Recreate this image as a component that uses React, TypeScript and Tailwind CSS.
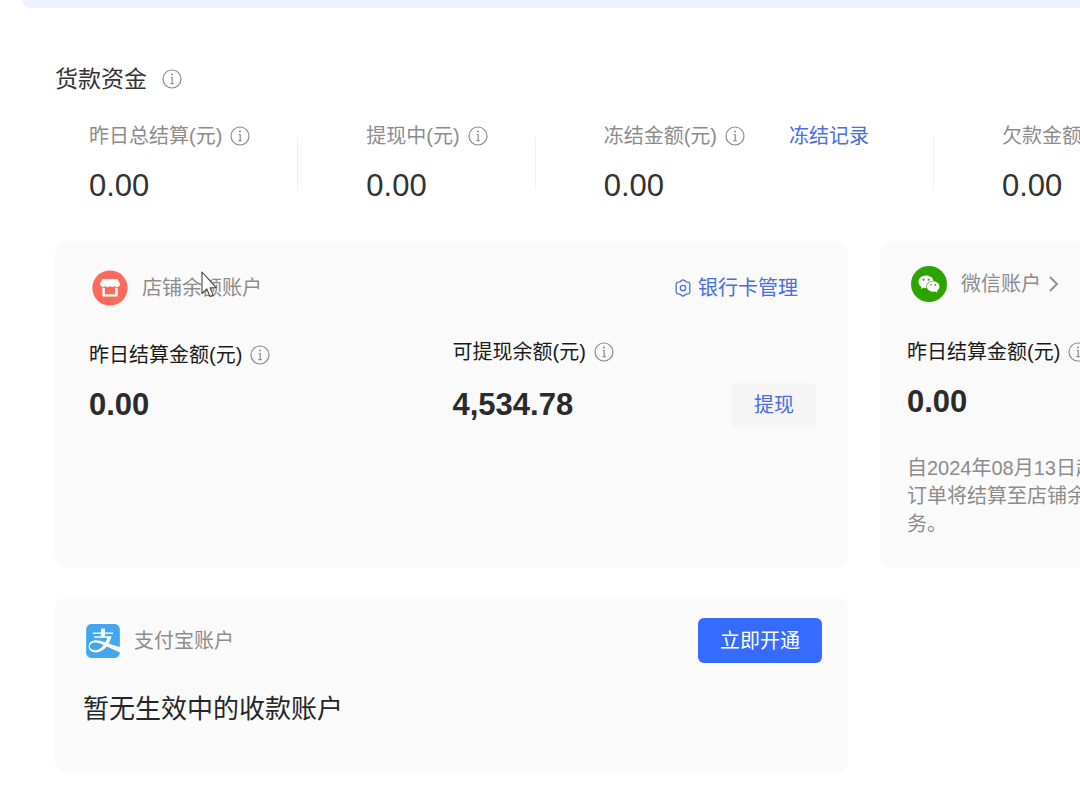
import type { ReactNode } from 'react';
import { AiFillWechat } from 'react-icons/ai';
import { SiAlipay } from 'react-icons/si';

function InfoIcon() {
  return (
    <svg viewBox="0 0 20 20" className="w-5 h-5 shrink-0 text-[#8c8c8c]" fill="none" stroke="currentColor">
      <circle cx="10" cy="10" r="9" strokeWidth="1.2" />
      <path d="M8.7 8.5h1.5v6M8.4 14.7h3.4" strokeWidth="1.2" />
      <circle cx="10" cy="5.6" r="1" fill="currentColor" stroke="none" />
    </svg>
  );
}

function ShopIcon() {
  return (
    <svg viewBox="0 0 36 36" className="w-9 h-9 shrink-0">
      <circle cx="18" cy="18" r="17.6" fill="#fb6a5c" />
      <path
        d="M10.6 9h14.8l2.6 4.8c0 2-1.2 3.2-2.7 3.2-1.200 0-1.900-.5-2.400-1.300-.5.8-1.300 1.300-2.400 1.300s-2-.5-2.500-1.300c-.5.8-1.300 1.300-2.400 1.300s-1.900-.5-2.400-1.300c-.5.8-1.200 1.300-2.400 1.300-1.500 0-2.800-1.200-2.800-3.200z"
        fill="#fff"
      />
      <path d="M11.6 17.8v7.6h12.8v-7.6" fill="none" stroke="#fff" strokeWidth="2.4" strokeLinejoin="round" />
    </svg>
  );
}

function CardManageIcon() {
  return (
    <svg viewBox="0 0 18 18" className="w-[18px] h-[18px] shrink-0" fill="none" stroke="currentColor" strokeWidth="1.3">
      <path
        d="M9 .9c1 0 1.900 1.200 3 1.800s2.900.5 3.600 1.500.1 2.800.1 4.800.6 3.800-.1 4.800-2.500.9-3.600 1.500-2 1.800-3 1.800-1.900-1.200-3-1.800-2.900-.5-3.600-1.500-.1-2.800-.1-4.800-.6-3.800.1-4.800 2.500-.9 3.600-1.500 2-1.800 3-1.800z"
        strokeLinejoin="round"
      />
      <circle cx="9" cy="9" r="2.7" />
    </svg>
  );
}

function Cursor() {
  return (
    <svg viewBox="0 0 16 28" className="absolute left-[146px] top-[30px] w-4 h-7">
      <path
        d="M1 1v21.500l4.800-4.600 3.200 7.600 3.200-1.400-3.200-7.400h6.200z"
        fill="#fff"
        stroke="#444"
        strokeWidth="1.1"
        strokeLinejoin="round"
      />
    </svg>
  );
}

interface StatProps {
  label: string;
  value: string;
  children?: ReactNode;
}

function Stat({ label, value, children }: StatProps) {
  return (
    <div>
      <div className="flex items-center text-xl leading-7 text-[#8c8c8c] whitespace-nowrap">
        <span>{label}</span>
        <span className="ml-2">
          <InfoIcon />
        </span>
        {children}
      </div>
      <div className="mt-4 text-[31px] leading-10 text-[#333]">{value}</div>
    </div>
  );
}

function Divider() {
  return <div className="w-px h-[53px] mt-[15px] bg-[#f0f0f0]" />;
}

function Amount({ label, value }: StatProps) {
  return (
    <div className="flex flex-col justify-between gap-[14px]">
      <div className="flex items-center gap-2 text-xl leading-7 text-[#1a1a1a] whitespace-nowrap">
        <span>{label}</span>
        <InfoIcon />
      </div>
      <div className="text-[31px] leading-11 font-bold text-[#2b2b2b]">{value}</div>
    </div>
  );
}

export default function App() {
  return (
    <div className="min-h-screen overflow-hidden bg-white font-['Liberation_Sans','Noto_Sans_CJK_SC',sans-serif]">
      <div className="min-w-[1704px]">
        <div className="ml-[22px] h-2 rounded-bl-lg bg-[#eef2ff]" />

        <main className="pt-14 pl-[55px] pr-[31px] pb-9">
          <div className="flex items-center gap-[15px]">
            <h1 className="text-[23px] leading-[30px] text-[#333]">货款资金</h1>
            <InfoIcon />
          </div>

          <section className="mt-7 pl-[34px] flex">
            <Stat label="昨日总结算(元)" value="0.00" />
            <div className="pl-[47px] pr-[68px]">
              <Divider />
            </div>
            <Stat label="提现中(元)" value="0.00" />
            <div className="pl-[47px] pr-[68px]">
              <Divider />
            </div>
            <Stat label="冻结金额(元)" value="0.00">
              <a href="#records" className="ml-11 text-[#4a6ee0]">
                冻结记录
              </a>
            </Stat>
            <div className="pl-16 pr-[68px]">
              <Divider />
            </div>
            <Stat label="欠款金额(元)" value="0.00" />
          </section>

          <div className="mt-[35px] grid grid-cols-2 gap-x-8 gap-y-[29px]">
            <section className="relative min-h-[327px] rounded-xl bg-[#fafafa] pt-[29px] pl-[34px] pr-8">
              <div className="flex items-center justify-between pl-[3px] pr-[18px] text-xl leading-7">
                <div className="flex items-center gap-[14px] text-[#8c8c8c]">
                  <ShopIcon />
                  <h2>店铺余额账户</h2>
                </div>
                <a href="#cards" className="flex items-center gap-[6px] text-[#4a6ee0]">
                  <CardManageIcon />
                  银行卡管理
                </a>
              </div>
              <div className="mt-8 grid grid-cols-2">
                <div className="pt-[3px]">
                  <Amount label="昨日结算金额(元)" value="0.00" />
                </div>
                <div className="flex justify-between">
                  <Amount label="可提现余额(元)" value="4,534.78" />
                  <button className="self-end h-11 px-[22px] rounded bg-[#f5f5f5] text-xl leading-7 text-[#4a6ee0]">
                    提现
                  </button>
                </div>
              </div>
              <Cursor />
            </section>

            <section className="min-h-[327px] rounded-xl bg-[#fafafa] pt-[25px] pl-[27px] pr-8">
              <div className="flex items-center pl-1 text-xl leading-7 text-[#8c8c8c]">
                <span className="mr-[14px] flex w-9 h-9 items-center justify-center rounded-full bg-[#2ba300]">
                  <AiFillWechat className="w-6 h-6 text-white" />
                </span>
                <h2>微信账户</h2>
                <svg viewBox="0 0 10 16" className="ml-2 w-[10px] h-4" fill="none" stroke="currentColor" strokeWidth="1.8">
                  <path d="M1 1l7 7-7 7" />
                </svg>
              </div>
              <div className="mt-9">
                <Amount label="昨日结算金额(元)" value="0.00" />
              </div>
              <p className="mt-[30px] text-xl leading-7 text-[#8c8c8c]">
                自2024年08月13日起
                <br />
                订单将结算至店铺余额
                <br />
                务。
              </p>
            </section>

            <section className="min-h-[176px] rounded-xl bg-[#fafafa] pt-[21px] pl-7 pr-[26px]">
              <div className="flex items-center justify-between">
                <div className="flex items-center gap-[14px] pl-[3px] text-xl leading-7 text-[#8c8c8c]">
                  <span className="rounded-md bg-white">
                    <SiAlipay className="w-[34px] h-[34px] text-[#43a6ee]" />
                  </span>
                  <h2>支付宝账户</h2>
                </div>
                <button className="h-[45px] px-[22px] rounded-md bg-[#356bff] text-xl leading-7 text-white">立即开通</button>
              </div>
              <p className="mt-7 text-[26px] leading-9 text-[#262626]">暂无生效中的收款账户</p>
            </section>
          </div>
        </main>
      </div>
    </div>
  );
}
